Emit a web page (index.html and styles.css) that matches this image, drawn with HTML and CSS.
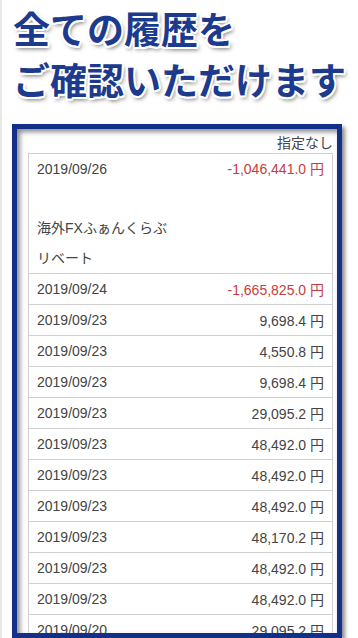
FILE: index.html
```html
<!DOCTYPE html>
<html lang="ja">
<head>
<meta charset="utf-8">
<link rel="stylesheet" href="styles.css">
</head>
<body>
<div class="page">
  <h1 class="title">
    <span class="title-line">全ての履歴を</span>
    <span class="title-line">ご確認いただけます</span>
  </h1>
  <div class="frame">
    <div class="filter">指定なし</div>
    <div class="table">
      <div class="row row-first">
        <div class="line">
          <span class="date">2019/09/26</span>
          <span class="amount neg">-1,046,441.0 円</span>
        </div>
        <div class="spacer"></div>
        <div class="line">海外FXふぁんくらぶ</div>
        <div class="line">リベート</div>
      </div>
      <div class="row"><span class="date">2019/09/24</span><span class="amount neg">-1,665,825.0 円</span></div>
      <div class="row"><span class="date">2019/09/23</span><span class="amount">9,698.4 円</span></div>
      <div class="row"><span class="date">2019/09/23</span><span class="amount">4,550.8 円</span></div>
      <div class="row"><span class="date">2019/09/23</span><span class="amount">9,698.4 円</span></div>
      <div class="row"><span class="date">2019/09/23</span><span class="amount">29,095.2 円</span></div>
      <div class="row"><span class="date">2019/09/23</span><span class="amount">48,492.0 円</span></div>
      <div class="row"><span class="date">2019/09/23</span><span class="amount">48,492.0 円</span></div>
      <div class="row"><span class="date">2019/09/23</span><span class="amount">48,492.0 円</span></div>
      <div class="row"><span class="date">2019/09/23</span><span class="amount">48,170.2 円</span></div>
      <div class="row"><span class="date">2019/09/23</span><span class="amount">48,492.0 円</span></div>
      <div class="row"><span class="date">2019/09/23</span><span class="amount">48,492.0 円</span></div>
      <div class="row"><span class="date">2019/09/20</span><span class="amount">29,095.2 円</span></div>
    </div>
  </div>
</div>
</body>
</html>
```

FILE: styles.css
```css
html, body {
  margin: 0;
  padding: 0;
  background: #fff;
}
body {
  width: 358px;
  height: 638px;
  overflow: hidden;
  box-sizing: border-box;
  border-left: 2px solid #e8e8e8;
}
.page {
  padding-top: 3px;
}
.title {
  margin: 0;
  padding-left: 11px;
  font-family: "Noto Sans CJK JP", sans-serif;
  font-weight: 700;
  font-size: 37px;
  line-height: 51px;
  color: #1d3b8e;
  text-shadow:
    2px 0 0 #fff, -2px 0 0 #fff, 0 2px 0 #fff, 0 -2px 0 #fff,
    1.5px 1.5px 0 #fff, -1.5px -1.5px 0 #fff, 1.5px -1.5px 0 #fff, -1.5px 1.5px 0 #fff,
    2px 3px 4px rgba(0, 0, 0, 0.55);
}
.title-line {
  display: block;
  white-space: nowrap;
}
.frame {
  margin-top: 19px;
  margin-left: 10px;
  width: 330px;
  height: 514px;
  box-sizing: border-box;
  border: 5px solid #12308a;
  padding: 0 4px 0 11px;
  overflow: hidden;
  background: #fff;
  box-shadow: 3px 3px 4px rgba(0, 0, 0, 0.45), inset 3px 3px 5px rgba(0, 0, 0, 0.45);
  font-family: "Liberation Sans", "Noto Sans CJK JP", sans-serif;
  font-size: 14px;
  color: #444;
}
.filter {
  padding-top: 4px;
  line-height: 20px;
  text-align: right;
}
.table {
  border: 1px solid #cfcfcf;
  border-bottom: none;
}
.row {
  display: flex;
  justify-content: space-between;
  align-items: center;
  height: 30px;
  padding: 0 8px;
  border-bottom: 1px solid #cfcfcf;
}
.row-first {
  display: block;
  height: auto;
}
.line {
  display: flex;
  justify-content: space-between;
  line-height: 30px;
  height: 30px;
}
.spacer {
  height: 29px;
}
.amount {
  white-space: nowrap;
}
.neg {
  color: #c83c3c;
}
```
